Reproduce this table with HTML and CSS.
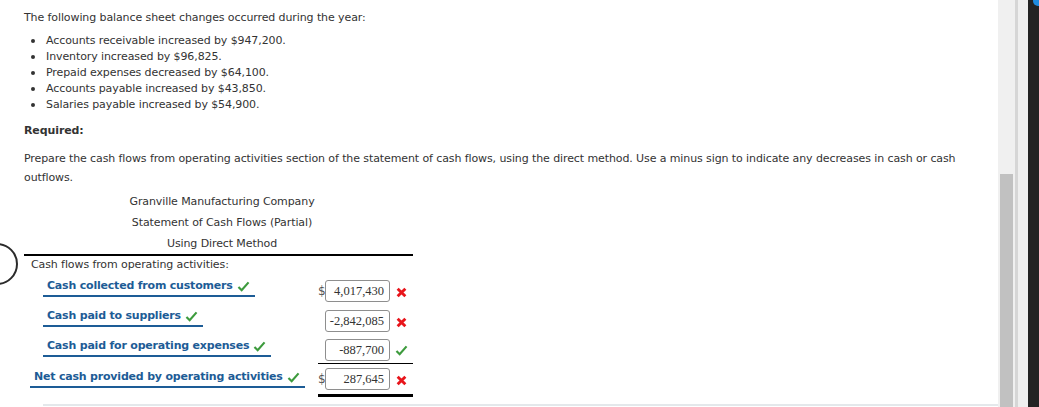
FILE: index.html
```html
<!DOCTYPE html>
<html>
<head>
<meta charset="utf-8">
<link rel="stylesheet" href="styles.css">
</head>
<body>
<div class="window">
  <main class="page">
    <p class="intro">The following balance sheet changes occurred during the year:</p>
    <ul class="changes">
      <li>Accounts receivable increased by $947,200.</li>
      <li>Inventory increased by $96,825.</li>
      <li>Prepaid expenses decreased by $64,100.</li>
      <li>Accounts payable increased by $43,850.</li>
      <li>Salaries payable increased by $54,900.</li>
    </ul>
    <p class="req">Required:</p>
    <p class="instr">Prepare the cash flows from operating activities section of the statement of cash flows, using the direct method. Use a minus sign to indicate any decreases in cash or cash outflows.</p>
    <div class="statement">
      <div class="st-head">
        <div>Granville Manufacturing Company</div>
        <div>Statement of Cash Flows (Partial)</div>
        <div>Using Direct Method</div>
      </div>
      <div class="section">Cash flows from operating activities:</div>
      <div class="row r1">
        <div class="label"><span class="sel">Cash collected from customers <svg class="ok" viewBox="0 0 14 12"><path d="M1.5 6.5 L5 10 L12.5 1.5"/></svg></span></div>
        <div class="amtcell">
          <div class="dollar">$</div>
          <div class="amt">4,017,430</div>
          <div class="mark"><svg class="bad" viewBox="0 0 10 10"><path d="M1.5 1.5 L8.5 8.5 M8.5 1.5 L1.5 8.5"/></svg></div>
        </div>
      </div>
      <div class="row r2">
        <div class="label"><span class="sel">Cash paid to suppliers <svg class="ok" viewBox="0 0 14 12"><path d="M1.5 6.5 L5 10 L12.5 1.5"/></svg></span></div>
        <div class="amtcell">
          <div class="dollar"></div>
          <div class="amt">-2,842,085</div>
          <div class="mark"><svg class="bad" viewBox="0 0 10 10"><path d="M1.5 1.5 L8.5 8.5 M8.5 1.5 L1.5 8.5"/></svg></div>
        </div>
      </div>
      <div class="row r3">
        <div class="label"><span class="sel">Cash paid for operating expenses <svg class="ok" viewBox="0 0 14 12"><path d="M1.5 6.5 L5 10 L12.5 1.5"/></svg></span></div>
        <div class="amtcell">
          <div class="dollar"></div>
          <div class="amt">-887,700</div>
          <div class="mark"><svg class="ok big" viewBox="0 0 14 12"><path d="M1.5 6.5 L5 10 L12.5 1.5"/></svg></div>
        </div>
      </div>
      <div class="row r4">
        <div class="label"><span class="sel">Net cash provided by operating activities <svg class="ok" viewBox="0 0 14 12"><path d="M1.5 6.5 L5 10 L12.5 1.5"/></svg></span></div>
        <div class="amtcell">
          <div class="dollar">$</div>
          <div class="amt">287,645</div>
          <div class="mark"><svg class="bad" viewBox="0 0 10 10"><path d="M1.5 1.5 L8.5 8.5 M8.5 1.5 L1.5 8.5"/></svg></div>
        </div>
      </div>
    </div>
    <div class="next"></div>
  </main>
  <div class="scrollbar"><div class="thumb"></div></div>
  <div class="gutter"></div>
  <div class="dark"><span class="dot"></span></div>
  <div class="circle"></div>
</div>
</body>
</html>
```

FILE: styles.css
```css
html, body {
  margin: 0;
  padding: 0;
  background: #ffffff;
}
body {
  font-family: "DejaVu Sans", Verdana, sans-serif;
  font-size: 11px;
  letter-spacing: -0.1px;
  color: #333333;
  overflow: hidden;
}
.window {
  position: relative;
  display: flex;
  width: 1039px;
  height: 407px;
  overflow: hidden;
}
.page {
  width: 998px;
  flex: none;
  padding: 10px 0 0 0;
  box-sizing: border-box;
  display: flex;
  flex-direction: column;
}
.intro {
  margin: 0 0 0 24px;
  line-height: 16px;
}
.changes {
  margin: 7px 0 0 0;
  padding: 0 0 0 46px;
  list-style: none;
  line-height: 16px;
}
.changes li {
  position: relative;
}
.changes li::before {
  content: "";
  position: absolute;
  left: -15px;
  top: 6px;
  width: 4px;
  height: 4px;
  border-radius: 50%;
  background: #333;
}
.req {
  margin: 10px 0 0 24px;
  font-weight: bold;
  line-height: 16px;
}
.instr {
  margin: 10px 0 0 24px;
  width: 975px;
  line-height: 19px;
}
.statement {
  margin: 4px 0 0 24px;
  width: 389px;
}
.st-head {
  text-align: center;
  line-height: 21px;
  padding-left: 7px;
  border-bottom: 2px solid #000;
}
.section {
  padding-left: 7px;
  line-height: 18px;
}
.row {
  display: flex;
  align-items: stretch;
}
.label {
  width: 294px;
  flex: none;
  display: flex;
  align-items: flex-start;
  padding-top: 2px;
  box-sizing: border-box;
}
.sel {
  display: inline-flex;
  align-items: center;
  gap: 4px;
  margin-left: 19px;
  font-weight: bold;
  letter-spacing: -0.2px;
  color: #1d5c96;
  padding: 0 5px 1px 4px;
  border-bottom: 2px solid #1d5c96;
  line-height: 16px;
}
.amtcell {
  width: 95px;
  flex: none;
  display: flex;
  align-items: center;
  height: 30px;
}
.r1 { margin-top: 2px; }
.r3 .amtcell { height: 27px; }
.r4 .label { padding-top: 6px; }
.r4 .sel { margin-left: 6px; }
.r4 .amtcell {
  border-top: 1px solid #000;
  border-bottom: 3px solid #000;
}
.ok {
  width: 13px;
  height: 11px;
  fill: none;
  stroke: #3d9b3d;
  stroke-width: 2.4;
}
.bad {
  width: 11px;
  height: 11px;
  fill: none;
  stroke: #e8151b;
  stroke-width: 2.6;
}
.dollar {
  width: 7px;
  flex: none;
  font-size: 12px;
  color: #555;
}
.amt {
  width: 65px;
  height: 22px;
  flex: none;
  box-sizing: border-box;
  border: 1px solid #8e8e8e;
  border-radius: 3px;
  font-family: "Liberation Serif", "Times New Roman", serif;
  font-size: 12.5px;
  letter-spacing: 0;
  color: #333;
  text-align: right;
  padding-right: 5px;
  line-height: 20px;
}
.mark {
  width: 23px;
  flex: none;
  display: flex;
  justify-content: center;
  padding-top: 2px;
}
.next {
  margin: auto 0 0 43px;
  border-top: 2px solid #e4e8eb;
  height: 1px;
}
.scrollbar {
  width: 17px;
  flex: none;
  background: #f0f0f0;
  display: flex;
  flex-direction: column;
  justify-content: flex-end;
  padding: 0 2px;
  box-sizing: border-box;
}
.thumb {
  height: 233px;
  background: #c1c1c1;
}
.gutter {
  width: 13px;
  flex: none;
  background: linear-gradient(to right, #d6d6d6 0, #d6d6d6 3px, #efefef 3px);
}
.dark {
  flex: 1;
  background: #232323;
  position: relative;
}
.dot {
  position: absolute;
  right: -4px;
  top: -4px;
  width: 10px;
  height: 10px;
  border-radius: 50%;
  background: #1f8ce0;
}
.circle {
  position: absolute;
  left: -24px;
  top: 243px;
  width: 38px;
  height: 38px;
  border: 2px solid #2b2b2b;
  border-radius: 50%;
  background: #fff;
}
```
